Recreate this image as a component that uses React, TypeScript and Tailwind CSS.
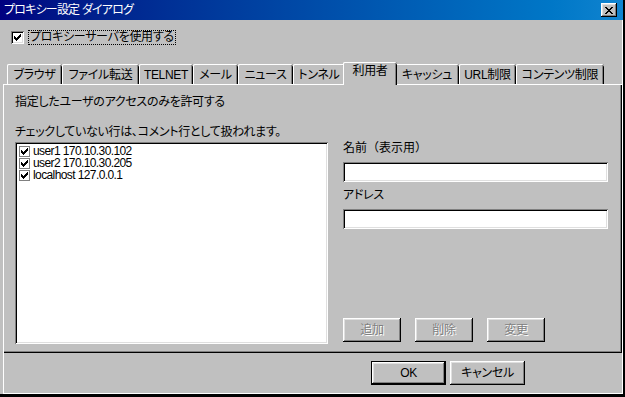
import React from "react";

const raised =
  "shadow-[inset_-1px_-1px_#000,inset_1px_1px_#fff,inset_-2px_-2px_#808080,inset_2px_2px_#dfdfdf]";
const sunken =
  "shadow-[inset_1px_1px_#808080,inset_-1px_-1px_#fff,inset_2px_2px_#000,inset_-2px_-2px_#dfdfdf]";

function CheckMark({ color = "#000" }: { color?: string }) {
  const cols = [2, 3, 4, 3, 2, 1, 0];
  return (
    <svg width="7" height="7" viewBox="0 0 7 7" shapeRendering="crispEdges">
      {cols.map((y, x) => (
        <rect key={x} x={x} y={y} width="1" height="3" fill={color} />
      ))}
    </svg>
  );
}

function CloseX() {
  const px: [number, number][] = [];
  for (let r = 0; r < 7; r++) {
    px.push([r, r], [r + 1, r], [6 - r, r], [7 - r, r]);
  }
  return (
    <svg width="8" height="7" viewBox="0 0 8 7" shapeRendering="crispEdges">
      {px.map(([x, y], i) => (
        <rect key={i} x={x} y={y} width="1" height="1" fill="#000" />
      ))}
    </svg>
  );
}

const tabs: { label: string; w: number; sel?: boolean }[] = [
  { label: "ブラウザ", w: 55 },
  { label: "ファイル転送", w: 77 },
  { label: "TELNET", w: 54 },
  { label: "メール", w: 45 },
  { label: "ニュース", w: 55 },
  { label: "トンネル", w: 52 },
  { label: "利用者", w: 50, sel: true },
  { label: "キャッシュ", w: 64 },
  { label: "URL制限", w: 57 },
  { label: "コンテンツ制限", w: 88 },
];

const users = ["user1 170.10.30.102", "user2 170.10.30.205", "localhost 127.0.0.1"];

export default function App() {
  return (
    <div
      className="w-[625px] h-[397px] bg-[#c0c0c0] flex flex-col overflow-hidden text-[12px] leading-[14px] text-black border-b-[3px] border-r-[2px] border-[#000] [font-feature-settings:'palt'] tracking-[-0.3px]"
      style={{ fontFamily: '"Liberation Sans", "Noto Sans CJK JP", sans-serif' }}
    >
      {/* Title bar */}
      <div className="h-[20px] shrink-0 flex items-center justify-between pl-[4px] pr-[6px] bg-gradient-to-r from-[#000080] to-[#1084d0]">
        <span className="text-white tracking-[-0.8px]">プロキシー設定 ダイアログ</span>
        <div className={`w-[16px] h-[14px] bg-[#c0c0c0] flex items-center justify-center ${raised}`}>
          <CloseX />
        </div>
      </div>

      <div className="flex-1 flex flex-col ml-[3px] border-r border-b border-white">
        {/* use proxy checkbox */}
        <div className="h-[42px] shrink-0 flex items-start pt-[11px] pl-[8px]">
          <div className={`w-[13px] h-[13px] bg-white flex items-center justify-center ${sunken}`}>
            <CheckMark />
          </div>
          <span className="ml-[4px] -mt-[1px] px-[1px] border border-dotted border-black leading-[13px]">
            プロキシーサーバを使用する
          </span>
        </div>

        {/* Tabs */}
        <div className="h-[22px] shrink-0 flex items-end pl-[4px]">
          {tabs.map((t) =>
            t.sel ? (
              <div
                key={t.label}
                style={{ width: t.w + 4 }}
                className="relative z-10 -mx-[2px] -mb-[1px] h-[23px] bg-[#c0c0c0] rounded-t-[2px] flex justify-center pt-[2px] shadow-[inset_1px_0_#fff,inset_0_1px_#fff,inset_-1px_0_#000,inset_-2px_0_#808080]"
              >
                {t.label}
              </div>
            ) : (
              <div
                key={t.label}
                style={{ width: t.w }}
                className="h-[20px] bg-[#c0c0c0] rounded-t-[2px] flex items-center justify-center pt-[1px] shadow-[inset_1px_0_#fff,inset_0_1px_#fff,inset_-1px_0_#000,inset_-2px_0_#808080]"
              >
                {t.label}
              </div>
            )
          )}
        </div>

        {/* Panel */}
        <div className="h-[269px] shrink-0 flex flex-col pl-[12px] pt-[11px] shadow-[inset_1px_1px_#fff,inset_-1px_-1px_#000,inset_-2px_-2px_#808080]">
          <div>指定したユーザのアクセスのみを許可する</div>
          <div className="mt-[16px]">チェックしていない行は、コメント行として扱われます。</div>
          <div className="mt-[3px] flex">
            <div className={`w-[313px] h-[202px] bg-white pt-[3px] pl-[4px] ${sunken}`}>
              {users.map((u) => (
                <div key={u} className="h-[12px] flex items-center">
                  <div className="w-[11px] h-[11px] shrink-0 border border-[#808080] bg-white flex items-center justify-center">
                    <CheckMark />
                  </div>
                  <span
                    className="ml-[3px] text-[12px] leading-[11px] tracking-[-0.6px]"
                    style={{ fontFamily: '"Liberation Sans", sans-serif' }}
                  >
                    {u}
                  </span>
                </div>
              ))}
            </div>
            <div className="ml-[15px] -mt-[1px] flex flex-col">
              <div className="[font-feature-settings:normal] tracking-normal">名前（表示用）</div>
              <div className={`mt-[7px] w-[265px] h-[20px] bg-white ${sunken}`} />
              <div className="mt-[6px]">アドレス</div>
              <div className={`mt-[7px] w-[265px] h-[20px] bg-white ${sunken}`} />
              <div className="mt-[89px] flex gap-[14px]">
                {["追加", "削除", "変更"].map((b) => (
                  <div
                    key={b}
                    className={`w-[58px] h-[24px] flex items-center justify-center text-[#808080] [text-shadow:1px_1px_0_#fff] ${raised}`}
                  >
                    {b}
                  </div>
                ))}
              </div>
            </div>
          </div>
        </div>

        {/* Bottom buttons */}
        <div className="flex-1 flex items-start pt-[8px] pl-[367px] gap-[4px] border-l border-white">
          <div className="w-[75px] h-[24px] border border-black">
            <div className={`w-full h-full flex items-center justify-center ${raised}`}>OK</div>
          </div>
          <div className={`w-[75px] h-[24px] flex items-center justify-center ${raised}`}>キャンセル</div>
        </div>
      </div>
    </div>
  );
}
